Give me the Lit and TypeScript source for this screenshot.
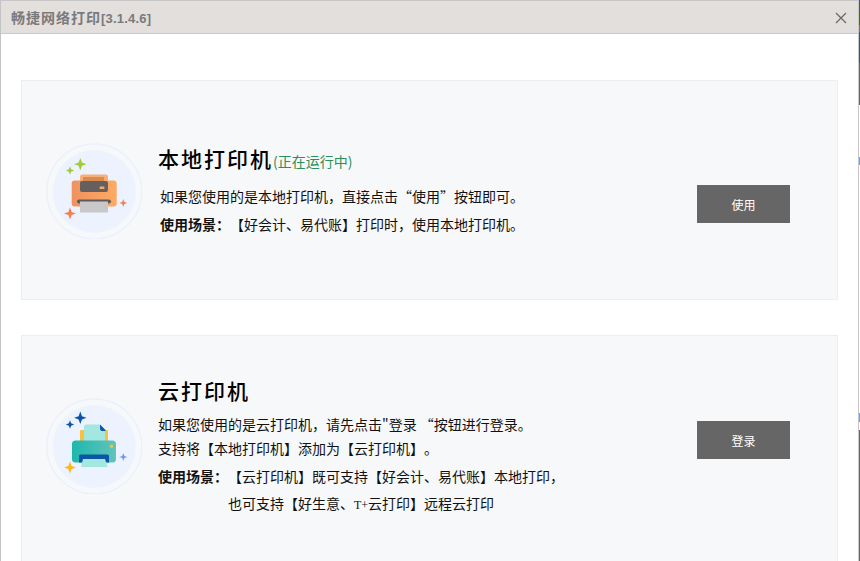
import { LitElement, css, html, svg } from 'lit';
import { customElement } from 'lit/decorators.js';

const star = (x: number, y: number, r: number, fill: string) => {
    const k = r * 0.27;
    return svg`<path fill=${fill} d="M${x} ${y - r}L${x + k} ${y - k}L${x + r} ${y}L${x + k} ${y + k}L${x} ${y + r}L${x - k} ${y + k}L${x - r} ${y}L${x - k} ${y - k}Z"/>`;
};

const halo = svg`
    <circle cx="48.3" cy="48.5" r="47.5" fill="none" stroke="#e9f1fd" stroke-width="1.4"/>
    <circle cx="48.3" cy="48.5" r="41.5" fill="#edf3fe"/>`;

const localIcon = html`
<svg width="96" height="96" viewBox="0 0 96 96">
    <defs>
        <linearGradient id="og" x1="0" x2="1" y1="0" y2="0">
            <stop offset="0" stop-color="#f0915f"/>
            <stop offset="1" stop-color="#fdab63"/>
        </linearGradient>
    </defs>
    ${halo}
    <rect x="34" y="31.5" width="28" height="14" rx="2.5" fill="#f7ae78"/>
    <rect x="25.7" y="37.5" width="45" height="26" rx="3" fill="url(#og)"/>
    <rect x="34" y="38" width="28" height="11" rx="2" fill="#65605e"/>
    <rect x="37" y="34" width="21" height="4" fill="#d98a4c"/>
    <rect x="53.5" y="43.5" width="5" height="2.5" rx="1" fill="#f4a76b"/>
    <rect x="31" y="56.5" width="34" height="4" rx="2" fill="#5f5a58"/>
    <rect x="34" y="58.5" width="28" height="11" fill="#c8c8ca"/>
    ${star(34.3, 21.2, 6.2, '#a3cb38')}
    ${star(24, 27.5, 4.2, '#a3cb38')}
    ${star(24, 70.5, 6, '#f77d52')}
    ${star(77.3, 60, 4, '#f77d52')}
</svg>`;

const cloudIcon = html`
<svg width="96" height="96" viewBox="0 0 96 96">
    <defs>
        <linearGradient id="tg" x1="0" x2="1" y1="0" y2="0">
            <stop offset="0" stop-color="#1db8ac"/>
            <stop offset="1" stop-color="#62c3bc"/>
        </linearGradient>
    </defs>
    ${halo}
    <rect x="34" y="32" width="28" height="12" rx="1" fill="#f5c242"/>
    <path fill="#a4e7e1" d="M39.5 26.5H54L59 32V44H38V28Z"/>
    <path fill="#0b56a4" d="M54 26.5L59.5 32V33H56Q54 33 54 30Z"/>
    <rect x="26" y="42.5" width="44" height="22" rx="3.5" fill="url(#tg)"/>
    <path fill="#0b56a4" d="M33 64.5V58Q33 56.5 34.5 56.5H61.5Q63 56.5 63 58V64.5Z"/>
    <path fill="#a4e7e1" d="M37 61H59L61.7 69H35Z"/>
    <rect x="64" y="46.8" width="3" height="3" rx="0.8" fill="#f5c242"/>
    ${star(34.3, 19.8, 6.2, '#0b56a4')}
    ${star(24, 26.5, 4.2, '#0b56a4')}
    ${star(24, 69.5, 6, '#fdb913')}
    ${star(77.3, 59, 4, '#6e97f5')}
</svg>`;

@customElement('app-root')
export class AppRoot extends LitElement {

    static styles = css`
    :host{
        display:flex;
        width:860px;
        height:561px;
        overflow:hidden;
        background:#fff;
        font-family:"Noto Sans CJK SC","Liberation Sans",sans-serif;
        color:#111;
        text-spacing-trim:space-all;
    }
    .window{
        flex:none;
        width:857px;
        height:561px;
        border-left:1px solid #c4c4c4;
        border-right:1px solid #c8c8c8;
        overflow:hidden;
    }
    /* sliver of whatever sits behind the dialog */
    .behind{
        flex:none;
        width:1px;
        height:561px;
        background:linear-gradient(to bottom,
            #555 0 13px, #4d6b00 13px 25px, #777 25px 32px, #0f6a73 32px 63px,
            #666 63px 105px, #fff 105px 157px, #6d9eeb 157px 165px, #fff 165px 413px,
            #6d9eeb 413px 422px, #fff 422px 430px, #666 430px 561px);
    }
    .titlebar{
        box-sizing:border-box;
        border-top:1px solid #c6c6c6;
        border-bottom:1px solid #c9c9c9;
        background:#e3dfdd;
        height:34px;
        display:flex;
        align-items:center;
        justify-content:space-between;
        padding:0 11px 0 10px;
        font-size:14px;
        font-weight:700;
        letter-spacing:1px;
        color:#7a7a7a;
    }
    .version{
        font-family:"Liberation Sans",sans-serif;
        font-size:13px;
        letter-spacing:0.2px;
    }
    .close{
        display:block;
        margin-top:1px;
    }
    .content{
        padding:46px 20px 0;
        display:flex;
        flex-direction:column;
        gap:35px;
    }
    .card{
        width:817px;
        height:220px;
        flex:none;
        box-sizing:border-box;
        border:1px solid #eeeeef;
        background:#f7f8fa;
        display:flex;
        align-items:flex-start;
    }
    .card.cloud{
        height:250px;
    }
    .icon{
        flex:none;
        width:96px;
        height:96px;
        margin:62px 16px 0 24px;
    }
    .text{
        flex:1;
        font-size:14px;
        line-height:20px;
    }
    h2{
        margin:0;
        font-size:21px;
        line-height:30px;
        font-weight:500;
        letter-spacing:2px;
        color:#000;
    }
    .status{
        font-size:14px;
        font-weight:400;
        letter-spacing:0;
        color:#2b8f5a;
    }
    p{
        margin:0;
        white-space:nowrap;
    }
    b{
        font-weight:700;
    }
    .latin{
        font-family:"Liberation Serif",serif;
        font-size:12px;
    }
    .local .text{
        padding-top:62px;
    }
    .local p{
        margin-left:2px;
    }
    .local h2{
        margin-bottom:10px;
    }
    .local p + p{
        margin-top:8px;
    }
    .cloud .text{
        padding-top:39px;
    }
    .cloud h2{
        margin-bottom:9px;
    }
    .cloud p + p{
        margin-top:4px;
    }
    .cloud p.usage{
        margin-top:8px;
    }
    .cloud p.indent{
        margin-top:7px;
        padding-left:70px;
    }
    button{
        flex:none;
        width:93px;
        height:38px;
        margin:104px 47px 0 0;
        border:none;
        padding:0;
        background:#666;
        color:#fff;
        font:12px "Noto Sans CJK SC",sans-serif;
    }
    .cloud button{
        margin-top:85px;
    }
    `

    render() {
        return html`
        <div class="window" lang="zh-CN">
            <div class="titlebar">
                <span>畅捷网络打印<span class="version">[3.1.4.6]</span></span>
                <svg class="close" width="12" height="12" viewBox="0 0 12 12">
                    <path d="M1 1L11 11M11 1L1 11" stroke="#666" stroke-width="1.2" fill="none"/>
                </svg>
            </div>
            <div class="content">
                <section class="card local">
                    <div class="icon">${localIcon}</div>
                    <div class="text">
                        <h2>本地打印机<span class="status">(正在运行中)</span></h2>
                        <p>如果您使用的是本地打印机，直接点击“使用”按钮即可。</p>
                        <p><b>使用场景：</b>【好会计、易代账】打印时，使用本地打印机。</p>
                    </div>
                    <button>使用</button>
                </section>
                <section class="card cloud">
                    <div class="icon">${cloudIcon}</div>
                    <div class="text">
                        <h2>云打印机</h2>
                        <p>如果您使用的是云打印机，请先点击"登录 “按钮进行登录。</p>
                        <p>支持将【本地打印机】添加为【云打印机】。</p>
                        <p class="usage"><b>使用场景：</b>【云打印机】既可支持【好会计、易代账】本地打印，</p>
                        <p class="indent">也可支持【好生意、<span class="latin">T+</span>云打印】远程云打印</p>
                    </div>
                    <button>登录</button>
                </section>
            </div>
        </div>
        <div class="behind"></div>
        `
    }
}

declare global {
    interface HTMLElementTagNameMap {
        'app-root': AppRoot
    }
}
